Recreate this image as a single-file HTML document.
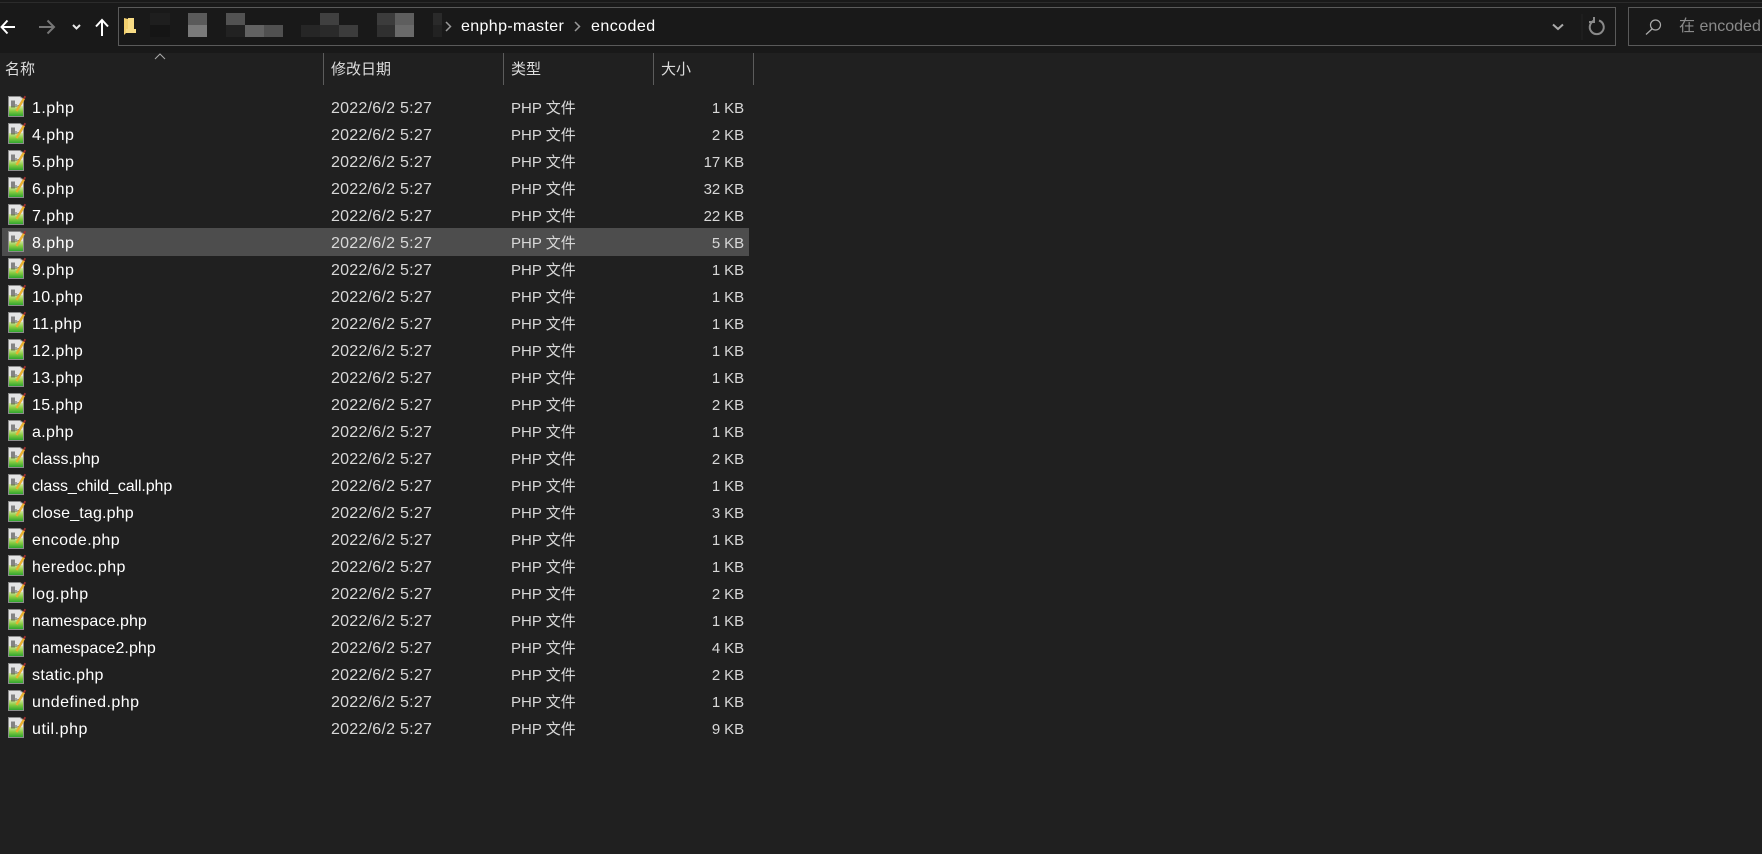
<!DOCTYPE html>
<html lang="zh"><head><meta charset="utf-8"><title>encoded</title>
<style>
html,body{margin:0;padding:0;background:#202020;}
body{width:1762px;height:854px;overflow:hidden;position:relative;font-family:"Liberation Sans","Noto Sans CJK SC",sans-serif;font-size:16px;color:#fff;}
.top{position:absolute;left:0;top:0;width:1762px;height:53px;background:#191919;}
.topline{position:absolute;left:0;top:2px;width:1762px;height:1px;background:#2b2b2b;}
.box{position:absolute;top:7px;height:37px;border:1px solid #5a5a5a;background:#191919;}
.px{position:absolute;width:19px;height:12px;}
.t{position:absolute;white-space:nowrap;line-height:20px;}
.h{position:absolute;top:60px;line-height:20px;color:#dcdcdc;font-size:15px;white-space:nowrap;}
.d{position:absolute;top:53px;width:1px;height:32px;background:#5c5c5c;}
.r{position:absolute;left:0;width:760px;height:27px;line-height:27px;}
.r span{position:absolute;top:1px;white-space:nowrap;}
.r .n{left:32px;color:#fff;letter-spacing:.45px;}
.r .m{left:331px;color:#d8d8d8;letter-spacing:.25px;}
.r .y{left:511px;color:#d8d8d8;font-size:15px;top:1px;}
.r .s{right:16px;color:#d8d8d8;font-size:15px;letter-spacing:-.1px;}
.r svg{position:absolute;left:6px;top:1px;}
.sel{position:absolute;left:2px;top:228px;width:747px;height:28px;background:#4d4d4d;}
</style></head><body>
<svg width="0" height="0" style="position:absolute"><defs>
<linearGradient id="g" x1="0" y1="0" x2="0" y2="1"><stop offset="0" stop-color="#d4e8a0"/><stop offset=".5" stop-color="#86cc40"/><stop offset="1" stop-color="#2fa52f"/></linearGradient>
<g id="i">
<path d="M2.500 1.500H14L17.500 4V21.500H2.500Z" fill="#e4e4e4" stroke="#8c8c8c"/>
<rect x="3" y="11" width="14" height="10" fill="url(#g)"/>
<path d="M6 5.500v7M8 5.500v7" stroke="#222" stroke-width="1"/>
<path d="M10 9v3M12 10v2" stroke="#666" stroke-width="1"/>
<path d="M10.500 16L18 3.500" stroke="#e8b030" stroke-width="2.400"/>
<path d="M17.800 3.800L19.300 1.200" stroke="#a03030" stroke-width="1.800"/>
</g></defs></svg>

<div class="top"></div><div class="topline"></div>

<svg style="position:absolute;left:0;top:14px" width="112" height="26" fill="none">
<path d="M15 13H1.500M7.500 6.500L1.500 13L7.500 19.500" stroke="#fff" stroke-width="2"/>
<path d="M39 13H54M47.500 6.500L54 13L47.500 19.500" stroke="#777" stroke-width="2"/>
<path d="M73 11L76.500 14.500L80 11" stroke="#e8e8e8" stroke-width="2"/>
<path d="M102 22V6.500M96 12.500L102 6L108 12.500" stroke="#fff" stroke-width="2"/>
</svg>

<div class="box" style="left:118px;width:1496px;"></div>
<svg style="position:absolute;left:123px;top:17px" width="14" height="19"><path d="M1 1L5 2V14L1 18Z" fill="#f2cf6e"/><path d="M5 1H11V12H13V16H3V12H5Z" fill="#f8dc85"/></svg>
<div class="px" style="left:150px;top:13px;width:20px;background:#1e1e1e"></div>
<div class="px" style="left:188px;top:13px;background:#5a5a5a"></div>
<div class="px" style="left:226px;top:13px;background:#525252"></div>
<div class="px" style="left:320px;top:13px;background:#404040"></div>
<div class="px" style="left:377px;top:13px;background:#3c3c3c"></div>
<div class="px" style="left:395px;top:13px;background:#5e5e5e"></div>
<div class="px" style="left:433px;top:13px;width:9px;background:#2a2a2a"></div>
<div class="px" style="left:150px;top:25px;width:20px;background:#151515"></div>
<div class="px" style="left:188px;top:25px;background:#7a7a7a"></div>
<div class="px" style="left:226px;top:25px;background:#222"></div>
<div class="px" style="left:245px;top:25px;background:#626262"></div>
<div class="px" style="left:264px;top:25px;background:#505050"></div>
<div class="px" style="left:301px;top:25px;background:#262626"></div>
<div class="px" style="left:320px;top:25px;background:#2a2a2a"></div>
<div class="px" style="left:339px;top:25px;background:#3c3c3c"></div>
<div class="px" style="left:377px;top:25px;background:#303030"></div>
<div class="px" style="left:395px;top:25px;background:#6a6a6a"></div>
<div class="px" style="left:433px;top:25px;width:9px;background:#222"></div>

<svg style="position:absolute;left:444px;top:20px" width="140" height="14" fill="none"><path d="M2 2L6.500 6.500L2 11" stroke="#999" stroke-width="1.500"/><path d="M131 2L135.500 6.500L131 11" stroke="#999" stroke-width="1.500"/></svg>
<div class="t" style="left:461px;top:17px;letter-spacing:.37px;">enphp-master</div>
<div class="t" style="left:591px;top:17px;letter-spacing:.45px;">encoded</div>

<svg style="position:absolute;left:1546px;top:14px" width="64" height="26" fill="none">
<path d="M7 10.500L12 15L17 10.500" stroke="#aaa" stroke-width="2"/>
<path d="M36 0V30" stroke="#222"/>
<path d="M48.500 5.500A7 7 0 1 0 53 5.500M48 2V7H43" stroke="#8a8a8a" stroke-width="2" transform="translate(0,1)"/>
</svg>

<div class="box" style="left:1628px;width:140px;"></div>
<svg style="position:absolute;left:1644px;top:17px" width="20" height="20" fill="none"><circle cx="11.500" cy="8" r="5" stroke="#aaa" stroke-width="1.200"/><path d="M8 12L2 17.500" stroke="#aaa" stroke-width="1.300"/></svg>
<div class="t" style="left:1679px;top:17px;color:#8a8a8a;">在 encoded</div>

<svg style="position:absolute;left:154px;top:53px" width="13" height="7" fill="none"><path d="M1 6L6 1L11 6" stroke="#aaa"/></svg>
<div class="h" style="left:5px;">名称</div>
<div class="h" style="left:331px;">修改日期</div>
<div class="h" style="left:511px;">类型</div>
<div class="h" style="left:661px;">大小</div>
<div class="d" style="left:323px"></div><div class="d" style="left:503px"></div><div class="d" style="left:653px"></div><div class="d" style="left:753px"></div>

<div class="sel"></div>

<div class="r" style="top:94px"><svg width="22" height="23"><use href="#i"/></svg><span class="n">1.php</span><span class="m">2022/6/2 5:27</span><span class="y">PHP 文件</span><span class="s">1 KB</span></div>
<div class="r" style="top:121px"><svg width="22" height="23"><use href="#i"/></svg><span class="n">4.php</span><span class="m">2022/6/2 5:27</span><span class="y">PHP 文件</span><span class="s">2 KB</span></div>
<div class="r" style="top:148px"><svg width="22" height="23"><use href="#i"/></svg><span class="n">5.php</span><span class="m">2022/6/2 5:27</span><span class="y">PHP 文件</span><span class="s">17 KB</span></div>
<div class="r" style="top:175px"><svg width="22" height="23"><use href="#i"/></svg><span class="n">6.php</span><span class="m">2022/6/2 5:27</span><span class="y">PHP 文件</span><span class="s">32 KB</span></div>
<div class="r" style="top:202px"><svg width="22" height="23"><use href="#i"/></svg><span class="n">7.php</span><span class="m">2022/6/2 5:27</span><span class="y">PHP 文件</span><span class="s">22 KB</span></div>
<div class="r" style="top:229px"><svg width="22" height="23"><use href="#i"/></svg><span class="n">8.php</span><span class="m">2022/6/2 5:27</span><span class="y">PHP 文件</span><span class="s">5 KB</span></div>
<div class="r" style="top:256px"><svg width="22" height="23"><use href="#i"/></svg><span class="n">9.php</span><span class="m">2022/6/2 5:27</span><span class="y">PHP 文件</span><span class="s">1 KB</span></div>
<div class="r" style="top:283px"><svg width="22" height="23"><use href="#i"/></svg><span class="n" style="letter-spacing:.37px">10.php</span><span class="m">2022/6/2 5:27</span><span class="y">PHP 文件</span><span class="s">1 KB</span></div>
<div class="r" style="top:310px"><svg width="22" height="23"><use href="#i"/></svg><span class="n" style="letter-spacing:.37px">11.php</span><span class="m">2022/6/2 5:27</span><span class="y">PHP 文件</span><span class="s">1 KB</span></div>
<div class="r" style="top:337px"><svg width="22" height="23"><use href="#i"/></svg><span class="n" style="letter-spacing:.37px">12.php</span><span class="m">2022/6/2 5:27</span><span class="y">PHP 文件</span><span class="s">1 KB</span></div>
<div class="r" style="top:364px"><svg width="22" height="23"><use href="#i"/></svg><span class="n" style="letter-spacing:.37px">13.php</span><span class="m">2022/6/2 5:27</span><span class="y">PHP 文件</span><span class="s">1 KB</span></div>
<div class="r" style="top:391px"><svg width="22" height="23"><use href="#i"/></svg><span class="n" style="letter-spacing:.37px">15.php</span><span class="m">2022/6/2 5:27</span><span class="y">PHP 文件</span><span class="s">2 KB</span></div>
<div class="r" style="top:418px"><svg width="22" height="23"><use href="#i"/></svg><span class="n" style="letter-spacing:.35px">a.php</span><span class="m">2022/6/2 5:27</span><span class="y">PHP 文件</span><span class="s">1 KB</span></div>
<div class="r" style="top:445px"><svg width="22" height="23"><use href="#i"/></svg><span class="n" style="letter-spacing:0">class.php</span><span class="m">2022/6/2 5:27</span><span class="y">PHP 文件</span><span class="s">2 KB</span></div>
<div class="r" style="top:472px"><svg width="22" height="23"><use href="#i"/></svg><span class="n" style="letter-spacing:-.11px">class_child_call.php</span><span class="m">2022/6/2 5:27</span><span class="y">PHP 文件</span><span class="s">1 KB</span></div>
<div class="r" style="top:499px"><svg width="22" height="23"><use href="#i"/></svg><span class="n" style="letter-spacing:.17px">close_tag.php</span><span class="m">2022/6/2 5:27</span><span class="y">PHP 文件</span><span class="s">3 KB</span></div>
<div class="r" style="top:526px"><svg width="22" height="23"><use href="#i"/></svg><span class="n">encode.php</span><span class="m">2022/6/2 5:27</span><span class="y">PHP 文件</span><span class="s">1 KB</span></div>
<div class="r" style="top:553px"><svg width="22" height="23"><use href="#i"/></svg><span class="n">heredoc.php</span><span class="m">2022/6/2 5:27</span><span class="y">PHP 文件</span><span class="s">1 KB</span></div>
<div class="r" style="top:580px"><svg width="22" height="23"><use href="#i"/></svg><span class="n" style="letter-spacing:.6px">log.php</span><span class="m">2022/6/2 5:27</span><span class="y">PHP 文件</span><span class="s">2 KB</span></div>
<div class="r" style="top:607px"><svg width="22" height="23"><use href="#i"/></svg><span class="n" style="letter-spacing:.08px">namespace.php</span><span class="m">2022/6/2 5:27</span><span class="y">PHP 文件</span><span class="s">1 KB</span></div>
<div class="r" style="top:634px"><svg width="22" height="23"><use href="#i"/></svg><span class="n" style="letter-spacing:.08px">namespace2.php</span><span class="m">2022/6/2 5:27</span><span class="y">PHP 文件</span><span class="s">4 KB</span></div>
<div class="r" style="top:661px"><svg width="22" height="23"><use href="#i"/></svg><span class="n" style="letter-spacing:.33px">static.php</span><span class="m">2022/6/2 5:27</span><span class="y">PHP 文件</span><span class="s">2 KB</span></div>
<div class="r" style="top:688px"><svg width="22" height="23"><use href="#i"/></svg><span class="n" style="letter-spacing:.47px">undefined.php</span><span class="m">2022/6/2 5:27</span><span class="y">PHP 文件</span><span class="s">1 KB</span></div>
<div class="r" style="top:715px"><svg width="22" height="23"><use href="#i"/></svg><span class="n" style="letter-spacing:.55px">util.php</span><span class="m">2022/6/2 5:27</span><span class="y">PHP 文件</span><span class="s">9 KB</span></div>
</body></html>
